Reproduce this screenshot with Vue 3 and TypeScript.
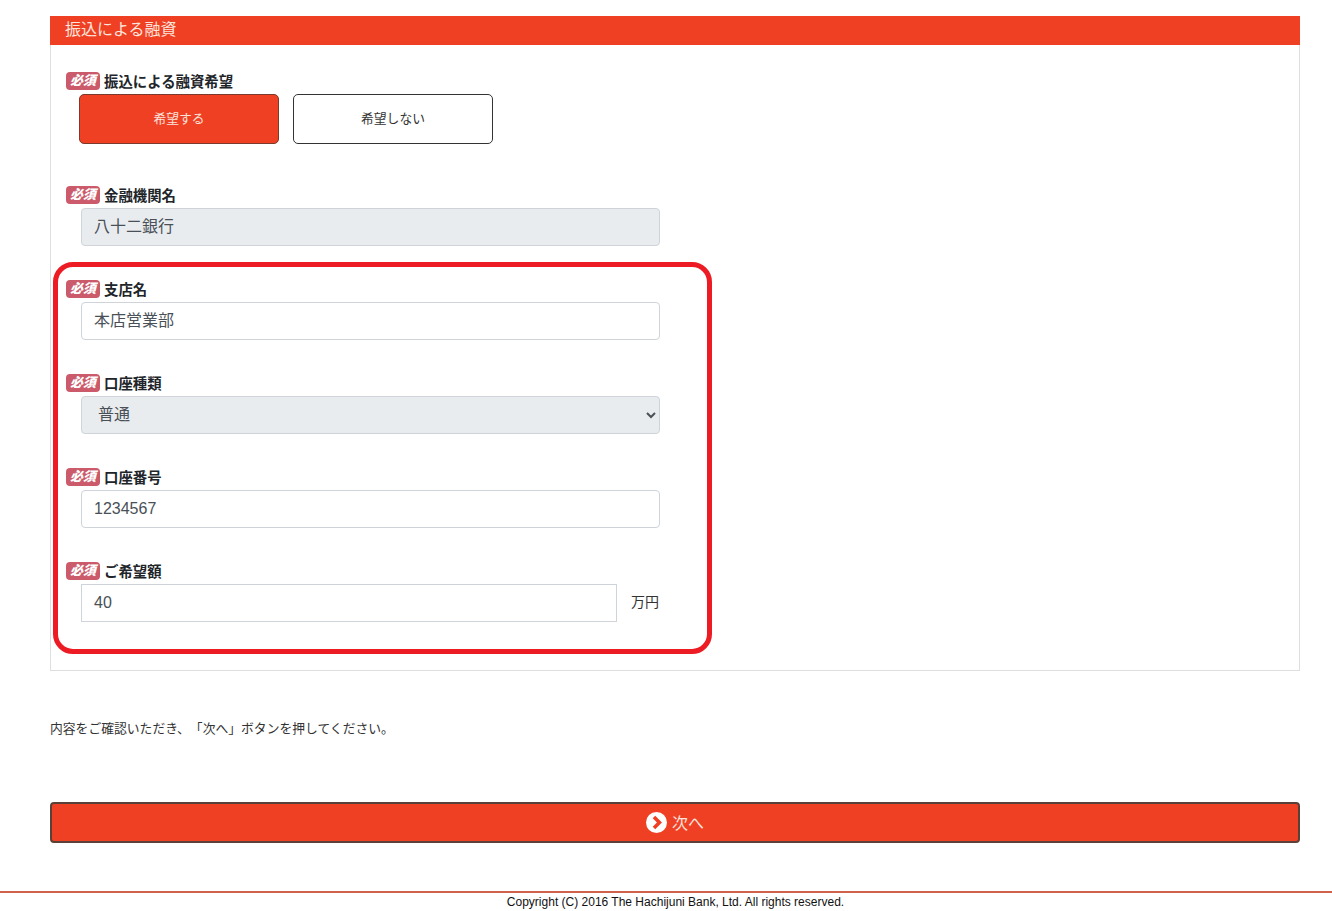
<script setup lang="ts">
const badge = '必須'
</script>

<template>
  <div class="page">
    <section class="panel">
      <h2 class="panel-head">振込による融資</h2>
      <div class="panel-body">
        <div class="field">
          <div class="label"><span class="badge">{{ badge }}</span><span>振込による融資希望</span></div>
          <div class="choices">
            <button type="button" class="choice on">希望する</button>
            <button type="button" class="choice">希望しない</button>
          </div>
        </div>
        <div class="field">
          <div class="label"><span class="badge">{{ badge }}</span><span>金融機関名</span></div>
          <input class="control locked" value="八十二銀行" readonly />
        </div>
        <div class="field">
          <div class="label"><span class="badge">{{ badge }}</span><span>支店名</span></div>
          <input class="control" value="本店営業部" readonly />
        </div>
        <div class="field">
          <div class="label"><span class="badge">{{ badge }}</span><span>口座種類</span></div>
          <select class="control locked sel" disabled>
            <option>普通</option>
          </select>
        </div>
        <div class="field">
          <div class="label"><span class="badge">{{ badge }}</span><span>口座番号</span></div>
          <input class="control num" value="1234567" readonly />
        </div>
        <div class="field">
          <div class="label"><span class="badge">{{ badge }}</span><span>ご希望額</span></div>
          <div class="amount">
            <input class="control num square" value="40" readonly />
            <span class="unit">万円</span>
          </div>
        </div>
        <div class="highlight"></div>
      </div>
    </section>

    <p class="note">内容をご確認いただき、「次へ」ボタンを押してください。</p>

    <button type="button" class="next">
      <svg class="next-icon" width="21" height="21" viewBox="0 0 20 20" aria-hidden="true">
        <circle cx="10" cy="10" r="10" fill="#fff" />
        <path d="M7.6 4.8 L12.8 10 L7.6 15.2" fill="none" stroke="#f04024" stroke-width="3.4" />
      </svg>
      <span class="next-text">次へ</span>
    </button>

    <footer class="foot">Copyright (C) 2016 The Hachijuni Bank, Ltd. All rights reserved.</footer>
  </div>
</template>

<style>
html, body { margin: 0; background: #fff; }
</style>

<style scoped>
.page {
  height: 911px;
  box-sizing: border-box;
  padding-top: 16px;
  overflow: hidden;
  font-family: "Noto Sans CJK JP", "Noto Sans", sans-serif;
  color: #212529;
}
.panel {
  margin: 0 32px 0 50px;
  border: 1px solid #dedede;
  border-top: 0;
  height: 655px;
  box-sizing: border-box;
}
.panel-head {
  margin: 0 -1px;
  height: 29px;
  padding-left: 15px;
  background: #f04024;
  color: #fbe4dc;
  font-size: 16px;
  font-weight: 400;
  line-height: 25px;
}
.panel-body {
  position: relative;
  padding: 27px 0 0 15px;
}
.field {
  margin-bottom: 34px;
  width: 594px;
}
.field:first-child { margin-bottom: 42px; }
.label {
  display: flex;
  align-items: flex-start;
  height: 22px;
  gap: 4px;
  font-size: 14.4px;
  font-weight: 700;
  line-height: 18px;
}
.badge {
  width: 34px;
  height: 18px;
  border-radius: 4px;
  background: #cb5a6a;
  color: #fff;
  font-family: "Liberation Serif", "Noto Sans CJK JP", serif;
  font-size: 13px;
  font-style: italic;
  font-weight: 900;
  line-height: 17px;
  text-align: center;
}
.choices {
  display: flex;
  gap: 14px;
  margin-left: 13px;
}
.choice {
  width: 200px;
  height: 50px;
  box-sizing: border-box;
  border: 1px solid #333;
  border-radius: 5px;
  background: #fff;
  color: #333;
  font-family: inherit;
  font-size: 12.8px;
  padding: 0 0 4px;
}
.choice.on {
  background: #f04024;
  border-color: #7a3a2c;
  color: #fbe4dc;
}
.control {
  display: block;
  width: 579px;
  height: 38px;
  box-sizing: border-box;
  margin-left: 15px;
  padding: 0 12px 4px;
  border: 1px solid #ced4da;
  border-radius: 4px;
  background: #fff;
  color: #495057;
  font-family: inherit;
  font-size: 16px;
  outline: none;
}
.locked { background: #e9ecef; }
.sel { opacity: 1; }
.num {
  padding-bottom: 0;
  font-family: "Liberation Sans", Arial, sans-serif;
}
.amount {
  display: flex;
  align-items: center;
  gap: 14px;
}
.square {
  width: 536px;
  border-radius: 0;
}
.unit {
  padding-bottom: 4px;
  font-size: 14px;
  color: #333;
}
.highlight {
  position: absolute;
  left: 2px;
  top: 217px;
  width: 659px;
  height: 392px;
  box-sizing: border-box;
  border: 5px solid #ed1c24;
  border-radius: 20px;
  pointer-events: none;
}
.note {
  margin: 48px 0 0 50px;
  font-size: 12.8px;
  line-height: 18px;
  color: #333;
  text-spacing-trim: space-all;
}
.next {
  display: flex;
  align-items: center;
  justify-content: center;
  gap: 5px;
  width: 1250px;
  height: 41px;
  margin: 65px 0 0 50px;
  box-sizing: border-box;
  border: 2px solid #5b4038;
  border-radius: 4px;
  background: #f04024;
  color: #fbe4dc;
  font-family: inherit;
  font-size: 16px;
  padding: 0;
}
.next-icon { flex: none; }
.next-text { padding-bottom: 2px; }
.foot {
  margin-top: 48px;
  border-top: 2px solid #d0614d;
  padding: 1px 0 0 19px;
  text-align: center;
  font-family: "Liberation Sans", Arial, sans-serif;
  font-size: 12px;
  line-height: 16px;
  color: #111;
}
</style>
